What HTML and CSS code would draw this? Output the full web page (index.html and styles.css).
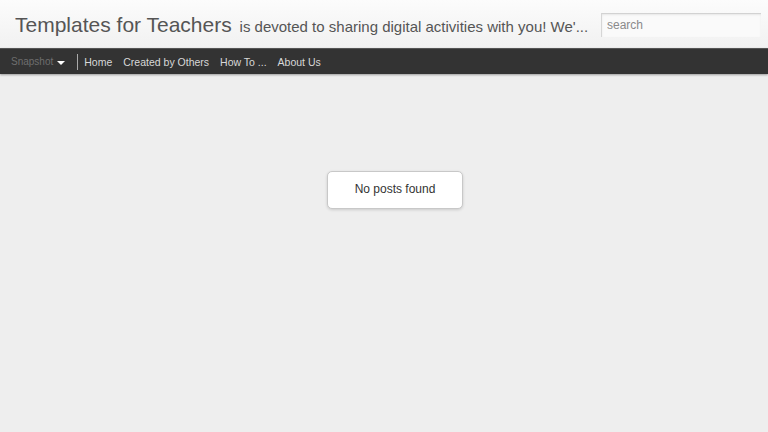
FILE: index.html
```html
<!DOCTYPE html>
<html lang="en">
<head>
    <meta charset="UTF-8">
    <meta name="viewport" content="width=device-width, initial-scale=1.0">
    <title>Templates for Teachers</title>
    <link rel="stylesheet" href="styles.css">
</head>
<body>

    <div class="header">
        <h1 class="blog-title">Templates for Teachers <span class="description">is devoted to sharing digital activities with you! We'...</span></h1>
        <input class="search" type="text" placeholder="search">
    </div>

    <div class="nav">
        <span class="view-name">Snapshot <span class="caret"></span></span>
        <span class="divider"></span>
        <a href="#">Home</a>
        <a href="#">Created by Others</a>
        <a href="#">How To ...</a>
        <a href="#">About Us</a>
    </div>

    <div class="content">
        <div class="message">No posts found</div>
    </div>

</body>
</html>
```

FILE: styles.css
```css
body {
    margin: 0;
    padding: 0;
    font-family: "Liberation Sans", Arial, sans-serif;
    background-color: #eeeeee;
    height: 432px;
    overflow: hidden;
}
.header {
    display: flex;
    align-items: center;
    height: 48px;
    padding: 1px 0 0 15px;
    box-sizing: border-box;
    background: linear-gradient(#fcfcfc, #f1f1f1);
}
.blog-title {
    flex: 1;
    margin: 0;
    font-size: 21px;
    font-weight: normal;
    color: #555;
    white-space: nowrap;
    overflow: hidden;
}
.description {
    font-size: 15px;
    color: #555;
    margin-left: 2px;
}
.search {
    flex-shrink: 0;
    width: 160px;
    height: 24px;
    box-sizing: border-box;
    padding: 0 5px;
    margin: 0 7px 0 10px;
    font-family: "Liberation Sans", Arial, sans-serif;
    font-size: 12px;
    color: #555;
    background: #fafafa;
    border: none;
    border-top: 1px solid #d2d2d2;
    border-left: 1px solid #d6d6d6;
    box-shadow: inset 0 1px 2px rgba(0, 0, 0, 0.08);
}
.search::placeholder {
    color: #8a8a8a;
}
.nav {
    display: flex;
    align-items: center;
    height: 26px;
    padding: 0 11px;
    background-color: #333;
    border-top: 1px solid #555;
    box-sizing: border-box;
    box-shadow: 0 1px 2px rgba(0, 0, 0, 0.35);
    font-size: 10.5px;
}
.view-name {
    color: #6e6e6e;
    font-size: 10px;
    display: flex;
    align-items: center;
}
.caret {
    display: inline-block;
    width: 0;
    height: 0;
    margin-left: 4px;
    margin-top: 2px;
    border-left: 4px solid transparent;
    border-right: 4px solid transparent;
    border-top: 4px solid #fff;
}
.divider {
    width: 1px;
    height: 16px;
    background-color: #aaa;
    margin: 0 6px 0 12px;
}
.nav a {
    color: #d8d8d8;
    text-decoration: none;
    margin-right: 11px;
}
.content {
    display: flex;
    justify-content: center;
    padding: 97px 0 0 22px;
}
.message {
    width: 134px;
    height: 36px;
    line-height: 35px;
    text-align: center;
    background-color: #fff;
    border: 1px solid #c8c8c8;
    border-radius: 5px;
    box-shadow: 0 1px 3px rgba(0, 0, 0, 0.15);
    font-size: 12px;
    color: #333;
}
```
